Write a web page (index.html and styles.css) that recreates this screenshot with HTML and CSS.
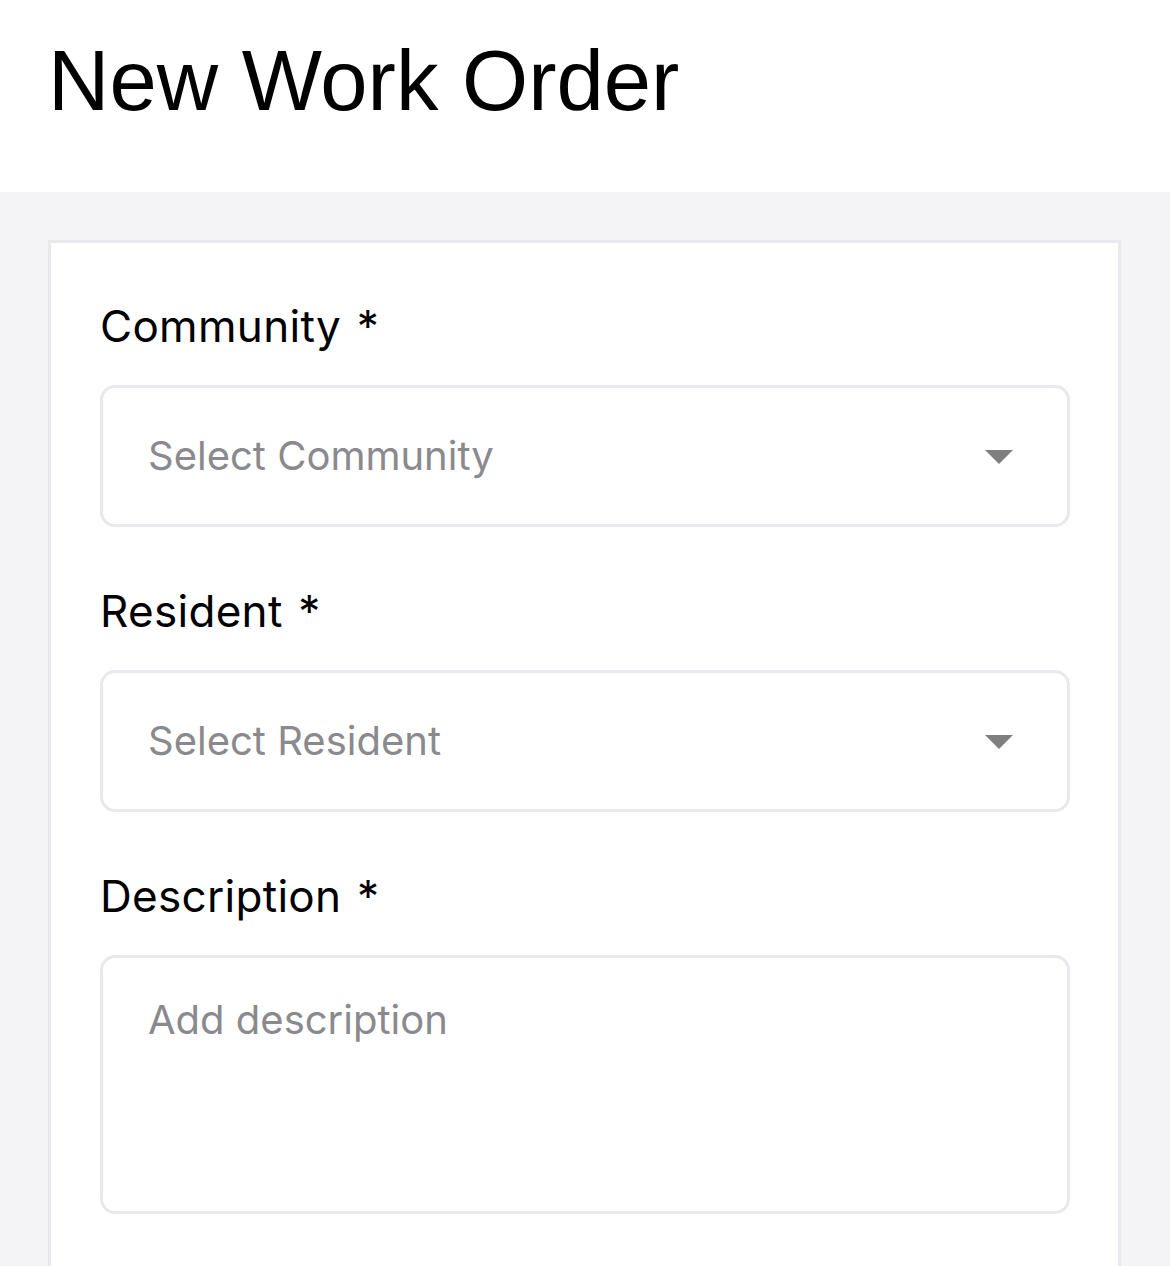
FILE: index.html
```html
<!DOCTYPE html>
<html lang="en">
<head>
<meta charset="utf-8">
<title>New Work Order</title>
<link rel="stylesheet" href="styles.css">
</head>
<body>
<header class="page-header">
  <h1 class="page-title">New Work Order</h1>
</header>
<main class="page-body">
  <section class="card">
    <div class="field">
      <div class="field-label">Community *</div>
      <div class="select-box">
        <span class="placeholder">Select Community</span>
        <span class="caret"></span>
      </div>
    </div>
    <div class="field">
      <div class="field-label">Resident *</div>
      <div class="select-box">
        <span class="placeholder">Select Resident</span>
        <span class="caret"></span>
      </div>
    </div>
    <div class="field">
      <div class="field-label">Description *</div>
      <textarea class="text-area" placeholder="Add description"></textarea>
    </div>
  </section>
</main>
</body>
</html>
```
FILE: styles.css
```css
* { box-sizing: border-box; }
html, body { margin: 0; padding: 0; }
body {
  background: #f4f4f6;
  font-family: Inter, "Noto Sans", sans-serif;
  color: #000;
}
.page-header {
  background: #fff;
  padding: 31px 46px 61px 48px;
}
.page-title {
  margin: 0;
  font-family: "Liberation Sans", Arial, sans-serif;
  font-weight: 400;
  font-size: 85px;
  line-height: 100px;
  color: #000;
}
.page-body {
  padding: 48px 49px 0 48px;
}
.card {
  background: #fff;
  border: 3px solid #e8e8ed;
  border-bottom: none;
  padding: 56px 48px 200px 49px;
  display: flex;
  flex-direction: column;
  gap: 57px;
}
.field {
  display: flex;
  flex-direction: column;
  gap: 32px;
}
.field-label {
  font-size: 44px;
  line-height: 54px;
  letter-spacing: 0.3px;
  word-spacing: 3px;
  color: #000;
}
.select-box {
  height: 142px;
  border: 3px solid #e8e8ed;
  border-radius: 15px;
  display: flex;
  align-items: center;
  justify-content: space-between;
  padding: 0 54px 0 45px;
}
.placeholder {
  font-size: 40px;
  line-height: 48px;
  color: #8a8a8e;
}
.caret {
  width: 0;
  height: 0;
  border-left: 14.5px solid transparent;
  border-right: 14.5px solid transparent;
  border-top: 14px solid #7f7f7f;
  margin-top: 2px;
}
.text-area {
  display: block;
  width: 100%;
  height: 259px;
  border: 3px solid #e8e8ed;
  border-radius: 15px;
  padding: 38px 45px;
  font-family: Inter, "Noto Sans", sans-serif;
  font-size: 40px;
  line-height: 48px;
  color: #000;
  resize: none;
  outline: none;
  background: #fff;
}
.text-area::placeholder {
  color: #8a8a8e;
  opacity: 1;
}
```
